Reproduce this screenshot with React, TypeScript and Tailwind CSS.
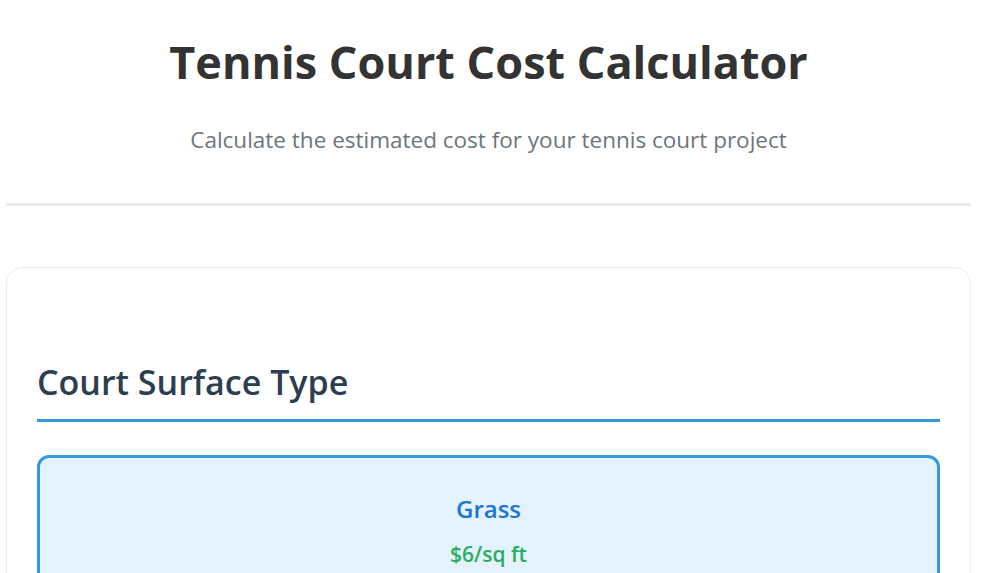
export default function App() {
  return (
    <div className="min-h-screen bg-white font-['Open_Sans',sans-serif]">
      <div className="ml-[6px] w-[965px]">
        <header className="flex flex-col items-center border-b-[3px] border-[#e9ecef] pt-[30px] pb-[47px]">
          <h1 className="text-[45px] font-bold leading-[64px] text-[#333333]">
            Tennis Court Cost Calculator
          </h1>
          <p className="mt-[30px] text-[22.5px] leading-[32px] text-[#6c757d]">
            Calculate the estimated cost for your tennis court project
          </p>
        </header>

        <main className="mt-[61px] rounded-[16px] border border-[#eeeeee] px-[30px] pt-[94px]">
          <h2 className="border-b-[3px] border-[#3498db] pb-[17px] text-[34px] font-semibold leading-[40px] text-[#2c3e50]">
            Court Surface Type
          </h2>

          <div className="mt-[33px] flex flex-col items-center rounded-[12px] border-[3px] border-[#3498db] bg-[#e3f2fd] pt-[35px] pb-[20px]">
            <span className="text-[24px] font-semibold leading-[32px] text-[#1976d2]">Grass</span>
            <span className="mt-[15px] text-[21px] font-semibold leading-[28px] text-[#27ae60]">$6/sq ft</span>
          </div>
        </main>
      </div>
    </div>
  );
}
